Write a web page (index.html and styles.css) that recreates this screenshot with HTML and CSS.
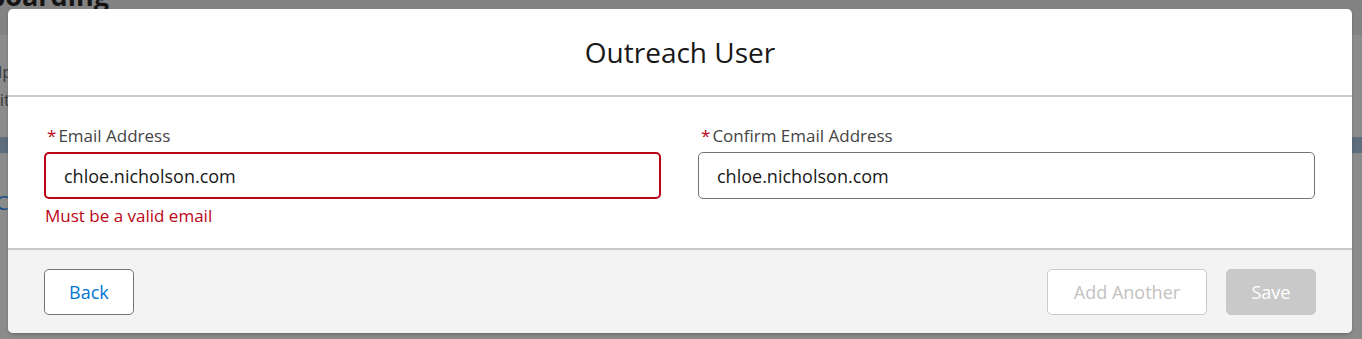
FILE: index.html
```html
<!DOCTYPE html>
<html lang="en">
<head>
    <meta charset="UTF-8">
    <title>Outreach User</title>
    <link rel="stylesheet" href="styles.css">
</head>
<body>
<div id="page">
    <div class="page-head">
        <h1 class="page-title">Onboarding</h1>
    </div>
    <div class="page-intro">
        <p>Help your partners get set up</p>
        <p>Invite them with email</p>
    </div>
    <div class="page-band"></div>
    <div class="page-link">Contacts</div>
</div>

<div class="modal">
    <div class="modal-header">
        <h2 class="modal-title">Outreach User</h2>
    </div>
    <div class="modal-body">
        <div class="field has-error">
            <label class="field-label" for="email"><abbr class="req">*</abbr>Email Address</label>
            <input class="field-input" id="email" type="text" value="chloe.nicholson.com"/>
            <div class="field-help">Must be a valid email</div>
        </div>
        <div class="field">
            <label class="field-label" for="confirm"><abbr class="req">*</abbr>Confirm Email Address</label>
            <input class="field-input" id="confirm" type="text" value="chloe.nicholson.com"/>
        </div>
    </div>
    <div class="modal-footer">
        <button class="btn btn-neutral">Back</button>
        <div class="footer-right">
            <button class="btn btn-neutral" disabled>Add Another</button>
            <button class="btn btn-brand" disabled>Save</button>
        </div>
    </div>
</div>
</body>
</html>
```

FILE: styles.css
```css
*{
    margin: 0;
    padding: 0;
    box-sizing: border-box;
}

body{
    width: 1362px;
    height: 339px;
    overflow: hidden;
    position: relative;
    background: #8b8b8b;
    font-family: "Open Sans", "Noto Sans", sans-serif;
}

/* page behind the modal */
#page{
    margin-left: -24px;
}
.page-head{
    height: 35px;
    background: #828282;
    overflow: hidden;
}
.page-title{
    font-size: 27px;
    font-weight: 700;
    line-height: 28px;
    margin-top: -18px;
    margin-left: -27px;
    color: #141414;
}
.page-intro{
    width: 34px;
    overflow: hidden;
    white-space: nowrap;
    padding-top: 23px;
    color: #3a3a3a;
    font-size: 17px;
    line-height: 28px;
    height: 102px;
}
.page-band{
    height: 16px;
    background: #5f6c7c;
}
.page-link{
    width: 36px;
    overflow: hidden;
    white-space: nowrap;
    margin-top: 36px;
    padding-left: 20px;
    color: #1d4f86;
    font-size: 20px;
}

/* modal */
.modal{
    position: absolute;
    top: 9px;
    left: 8px;
    width: 1344px;
    height: 324px;
    background: #fff;
    border-radius: 5px;
    box-shadow: 0 2px 3px rgba(0,0,0,.18);
    display: flex;
    flex-direction: column;
    color: #181818;
}
.modal-header{
    height: 88px;
    border-bottom: 2px solid #c9c9c9;
    display: flex;
    align-items: center;
    justify-content: center;
}
.modal-title{
    font-weight: 400;
    font-size: 28px;
    color: #181818;
}

.modal-body{
    display: grid;
    grid-template-columns: 617px 617px;
    column-gap: 37px;
    padding: 27px 36px 0 36px;
    height: 153px;
    border-bottom: 2px solid #c9c9c9;
}
.field-label{
    display: block;
    font-size: 17px;
    line-height: 24px;
    color: #444;
    margin-bottom: 4px;
    padding-left: 3px;
}
.req{
    color: #ba0517;
    text-decoration: none;
    margin-right: 2px;
}
.field-input{
    display: block;
    width: 100%;
    height: 47px;
    border: 1px solid #747474;
    border-radius: 5px;
    padding: 0 18px;
    font-family: inherit;
    font-size: 18px;
    color: #181818;
    background: #fff;
    outline: none;
}
.has-error .field-input{
    border: 2px solid #ba0517;
}
.field-help{
    margin-top: 5px;
    padding-left: 1px;
    font-size: 17px;
    line-height: 24px;
    color: #ba0517;
}

.modal-footer{
    flex: 1;
    background: #f3f3f3;
    border-radius: 0 0 5px 5px;
    display: flex;
    justify-content: space-between;
    align-items: flex-start;
    padding: 19px 36px 0 36px;
}
.footer-right{
    display: flex;
    gap: 19px;
}
.btn{
    height: 46px;
    padding: 0 24px;
    border-radius: 5px;
    font-family: inherit;
    font-size: 18px;
    background: #fff;
    cursor: pointer;
}
.btn-neutral{
    border: 1px solid #747474;
    color: #0176d3;
}
.btn-neutral:disabled{
    border-color: #c9c9c9;
    color: #c2c2c2;
    width: 160px;
}
.btn-brand{
    width: 90px;
    border: 1px solid #c9c9c9;
    background: #c9c9c9;
    color: #fff;
}
```
